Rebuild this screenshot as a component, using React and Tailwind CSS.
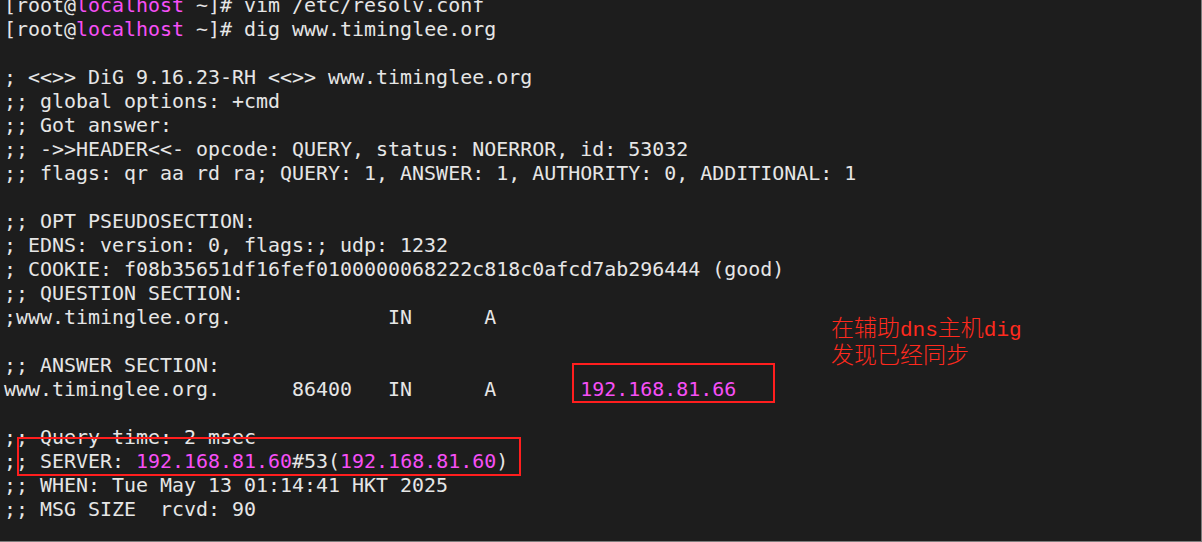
import React from "react";

const M = ({ children }) => <span className="text-[#f64ff6]">{children}</span>;
const L = ({ children }) => (
  <span className="font-['Liberation_Mono',monospace] text-[21px] leading-none">{children}</span>
);

const lines = [
  <>[root@<M>localhost</M> ~]# vim /etc/resolv.conf</>,
  <>[root@<M>localhost</M> ~]# dig www.timinglee.org</>,
  "",
  "; <<>> DiG 9.16.23-RH <<>> www.timinglee.org",
  ";; global options: +cmd",
  ";; Got answer:",
  ";; ->>HEADER<<- opcode: QUERY, status: NOERROR, id: 53032",
  ";; flags: qr aa rd ra; QUERY: 1, ANSWER: 1, AUTHORITY: 0, ADDITIONAL: 1",
  "",
  ";; OPT PSEUDOSECTION:",
  "; EDNS: version: 0, flags:; udp: 1232",
  "; COOKIE: f08b35651df16fef0100000068222c818c0afcd7ab296444 (good)",
  ";; QUESTION SECTION:",
  ";www.timinglee.org.             IN      A",
  "",
  ";; ANSWER SECTION:",
  <>www.timinglee.org.      86400   IN      A       <M>192.168.81.66</M></>,
  "",
  ";; Query time: 2 msec",
  <>;; SERVER: <M>192.168.81.60</M>#53(<M>192.168.81.60</M>)</>,
  ";; WHEN: Tue May 13 01:14:41 HKT 2025",
  ";; MSG SIZE  rcvd: 90",
];

export default function App() {
  return (
    <div className="relative w-[1202px] h-[542px] overflow-hidden bg-[#1d1d1d] border-r border-b border-[#7c7c7c]">
      {/* Terminal output */}
      <div className="-mt-[7px] pl-[4px] font-['DejaVu_Sans_Mono',monospace] text-[19.94px] leading-[24px] text-[#e6e6e6] whitespace-pre">
        {lines.map((l, i) => (
          <div key={i} className="h-[24px]">{l}</div>
        ))}
      </div>

      {/* Annotation boxes */}
      <div className="absolute left-[572px] top-[363px] w-[203px] h-[40px] border-2 border-[#ff1e1e]" />
      <div className="absolute left-[17px] top-[437px] w-[504px] h-[39px] border-2 border-[#ff1e1e]" />

      {/* Annotation note */}
      <div className="absolute left-[831px] top-[313px] font-['Noto_Sans_CJK_SC',sans-serif] font-light text-[23px] leading-[27px] text-[#ff2a1e]">
        <div className="h-[27px]">在辅助<L>dns</L>主机<L>dig</L></div>
        <div className="h-[27px]">发现已经同步</div>
      </div>
    </div>
  );
}
